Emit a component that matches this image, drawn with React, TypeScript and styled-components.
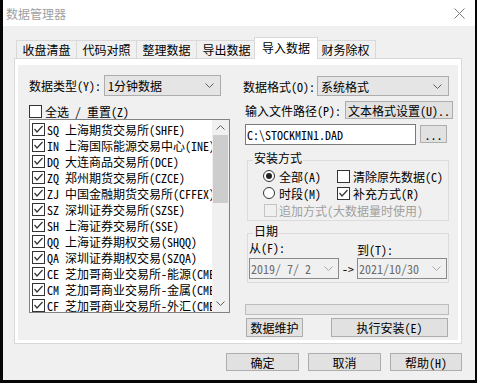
import styled, { createGlobalStyle } from "styled-components";

const SONG = `"Noto Sans Mono CJK SC", "Noto Sans CJK SC", monospace`;
const UI = `"Noto Sans CJK SC", "Noto Sans", sans-serif`;

const GlobalStyle = createGlobalStyle`
  html, body { margin: 0; padding: 0; background: #060606; }
  body { width: 477px; height: 383px; overflow: hidden; }
`;

const exchanges = [
  "SQ 上海期货交易所(SHFE)",
  "IN 上海国际能源交易中心(INE)",
  "DQ 大连商品交易所(DCE)",
  "ZQ 郑州期货交易所(CZCE)",
  "ZJ 中国金融期货交易所(CFFEX)",
  "SZ 深圳证券交易所(SZSE)",
  "SH 上海证券交易所(SSE)",
  "QQ 上海证券期权交易(SHQQ)",
  "QA 深圳证券期权交易(SZQA)",
  "CE 芝加哥商业交易所-能源(CME)",
  "CM 芝加哥商业交易所-金属(CME)",
  "CF 芝加哥商业交易所-外汇(CME)",
];

const tabs = ["收盘清盘", "代码对照", "整理数据", "导出数据", "导入数据", "财务除权"];

const Chevron = ({ up = false, color = "#606060" }: { up?: boolean; color?: string }) => (
  <svg width="9" height="5" viewBox="0 0 9 5">
    <polyline
      points={up ? "0.5,4.5 4.5,0.5 8.5,4.5" : "0.5,0.5 4.5,4.5 8.5,0.5"}
      fill="none"
      stroke={color}
      strokeWidth="1"
    />
  </svg>
);

const CheckBox = ({ checked = false, disabled = false }: { checked?: boolean; disabled?: boolean }) => (
  <Box $disabled={disabled}>
    {checked && (
      <svg width="11" height="11" viewBox="0 0 11 11">
        <polyline points="1.5,5 4,8 9.5,2" fill="none" stroke="#333" strokeWidth="1.2" />
      </svg>
    )}
  </Box>
);

const App = () => {
  return (
    <>
      <GlobalStyle />
      <Window>
        <TitleBar>
          <span>数据管理器</span>
          <svg width="11" height="11" viewBox="0 0 11 11">
            <path d="M0.5 0.5 L10.5 10.5 M10.5 0.5 L0.5 10.5" stroke="#7a7a7a" strokeWidth="1" />
          </svg>
        </TitleBar>
        <Body>
          <TabStrip>
            {tabs.map((t) => (
              <Tab key={t} $active={t === "导入数据"}>
                {t}
              </Tab>
            ))}
          </TabStrip>
          <Panel>
            <Page>
              <LeftCol>
                <FieldRow>
                  <Label $w={75}>数据类型(Y):</Label>
                  <Select $w={117}>
                    <span>1分钟数据</span>
                    <Chevron />
                  </Select>
                </FieldRow>
                <CheckAll>
                  <CheckBox />
                  <span>全选 / 重置(Z)</span>
                </CheckAll>
                <List>
                  <ListBody>
                    {exchanges.map((e) => (
                      <ListItem key={e}>
                        <CheckBox checked />
                        <ItemText>{e}</ItemText>
                      </ListItem>
                    ))}
                  </ListBody>
                  <ScrollBar>
                    <ScrollArrow>
                      <Chevron up color="#606060" />
                    </ScrollArrow>
                    <Thumb />
                    <ScrollArrow $bottom>
                      <Chevron color="#606060" />
                    </ScrollArrow>
                  </ScrollBar>
                </List>
              </LeftCol>

              <RightCol>
                <FieldRow>
                  <Label $w={74}>数据格式(O):</Label>
                  <Select $w={132} $h={20}>
                    <span>系统格式</span>
                    <Chevron />
                  </Select>
                </FieldRow>
                <PathRow>
                  <Label>输入文件路径(P):</Label>
                  <Button $w={108} $h={18} $push>
                    文本格式设置(U)..
                  </Button>
                </PathRow>
                <FileRow>
                  <TextInput>C:\STOCKMIN1.DAD</TextInput>
                  <Button $w={27} $h={18}>...</Button>
                </FileRow>

                <Group $top={15}>
                  <GroupLabel>安装方式</GroupLabel>
                  <OptionGrid>
                    <Option>
                      <Radio $checked />
                      <span>全部(A)</span>
                    </Option>
                    <Option $gap={3}>
                      <CheckBox />
                      <span>清除原先数据(C)</span>
                    </Option>
                    <Option>
                      <Radio />
                      <span>时段(M)</span>
                    </Option>
                    <Option $gap={3}>
                      <CheckBox checked />
                      <span>补充方式(R)</span>
                    </Option>
                    <Option $wide $disabled $gap={2}>
                      <CheckBox disabled />
                      <span>追加方式(大数据量时使用)</span>
                    </Option>
                  </OptionGrid>
                </Group>

                <Group $top={12}>
                  <GroupLabel>日期</GroupLabel>
                  <DateGrid>
                    <DateLabel>从(F):</DateLabel>
                    <span />
                    <DateLabel $drop={2}>到(T):</DateLabel>
                    <DateBox>
                      <span>2019/ 7/ 2</span>
                      <Chevron color="#a8a8a8" />
                    </DateBox>
                    <Arrow>-&gt;</Arrow>
                    <DateBox>
                      <span>2021/10/30</span>
                      <Chevron color="#a8a8a8" />
                    </DateBox>
                  </DateGrid>
                </Group>

                <Progress />
                <ActionRow>
                  <Button $w={57} $h={19}>数据维护</Button>
                  <Button $w={117} $h={19}>执行安装(E)</Button>
                </ActionRow>
              </RightCol>
            </Page>
          </Panel>
          <Footer>
            <Button $w={73} $h={18}>确定</Button>
            <Button $w={73} $h={18}>取消</Button>
            <Button $w={72} $h={18}>帮助(H)</Button>
          </Footer>
        </Body>
      </Window>
    </>
  );
};

const Window = styled.div`
  margin-left: 3px;
  width: 472px;
  height: 380px;
  background: #f0f0f0;
  display: flex;
  flex-direction: column;
  font-family: ${SONG};
  font-size: 12px;
  color: #000;
`;

const TitleBar = styled.div`
  height: 26px;
  flex-shrink: 0;
  background: #fff;
  display: flex;
  align-items: center;
  justify-content: space-between;
  padding: 0 10px 0 3px;
  font-family: ${UI};
  font-size: 12px;
  color: #a0a0a0;
`;

const Body = styled.div`
  padding: 11px 13px 0 11px;
  display: flex;
  flex-direction: column;
`;

const TabStrip = styled.div`
  display: flex;
  align-items: flex-end;
  height: 21px;
  padding-left: 2px;
  position: relative;
  z-index: 1;
`;

const Tab = styled.div<{ $active?: boolean }>`
  box-sizing: border-box;
  width: ${(p) => (p.$active ? 64 : 61)}px;
  height: ${(p) => (p.$active ? 22 : 18)}px;
  margin: ${(p) => (p.$active ? "0 -2px -1px -3px" : "0 0 0 -1px")};
  border: 1px solid #d9d9d9;
  border-bottom: none;
  background: ${(p) => (p.$active ? "#fff" : "#f0f0f0")};
  display: flex;
  align-items: center;
  justify-content: center;
  padding-bottom: ${(p) => (p.$active ? 2 : 0)}px;
  font-family: ${UI};
  font-size: 12px;
  position: relative;
  z-index: ${(p) => (p.$active ? 2 : 1)};
  &:first-child {
    margin-left: 0;
  }
`;

const Panel = styled.div`
  box-sizing: border-box;
  height: 286px;
  border: 1px solid #d9d9d9;
  background: #fff;
  padding: 6px 3px 3px 3px;
`;

const Page = styled.div`
  height: 100%;
  background: #f0f0f0;
  display: flex;
  gap: 13px;
  padding: 10px 0 0 11px;
  box-sizing: border-box;
`;

const LeftCol = styled.div`
  width: 201px;
  display: flex;
  flex-direction: column;
`;

const RightCol = styled.div`
  width: 210px;
  display: flex;
  flex-direction: column;
  padding-top: 1px;
`;

const FieldRow = styled.div`
  display: flex;
  align-items: center;
`;

const Label = styled.span<{ $w?: number }>`
  white-space: nowrap;
  ${(p) => (p.$w ? `width: ${p.$w}px; flex-shrink: 0;` : "")}
`;

const Select = styled.div<{ $w: number; $h?: number }>`
  box-sizing: border-box;
  width: ${(p) => p.$w}px;
  height: ${(p) => p.$h ?? 21}px;
  background: #e5e5e5;
  border: 1px solid #adadad;
  display: flex;
  align-items: center;
  justify-content: space-between;
  padding: 0 6px 0 3px;
  white-space: nowrap;
`;

const Box = styled.span<{ $disabled?: boolean }>`
  box-sizing: border-box;
  width: 13px;
  height: 13px;
  flex-shrink: 0;
  border: 1px solid ${(p) => (p.$disabled ? "#c4c4c4" : "#333")};
  background: ${(p) => (p.$disabled ? "#f0f0f0" : "#fff")};
  display: flex;
  align-items: center;
  justify-content: center;
`;

const Radio = styled.span<{ $checked?: boolean }>`
  box-sizing: border-box;
  width: 12px;
  height: 12px;
  flex-shrink: 0;
  border-radius: 50%;
  border: 1px solid #333;
  background: #fff;
  display: flex;
  align-items: center;
  justify-content: center;
  &::after {
    content: "";
    width: 6px;
    height: 6px;
    border-radius: 50%;
    background: ${(p) => (p.$checked ? "#222" : "transparent")};
  }
`;

const CheckAll = styled.div`
  margin-top: 9px;
  height: 13px;
  display: flex;
  align-items: center;
  gap: 3px;
  white-space: nowrap;
`;

const List = styled.div`
  margin-top: 1px;
  box-sizing: border-box;
  height: 194px;
  border: 1px solid #828282;
  background: #fff;
  display: flex;
`;

const ListBody = styled.div`
  flex: 1;
  min-width: 0;
  overflow: hidden;
  padding: 1px 0 0 2px;
`;

const ListItem = styled.div`
  height: 16px;
  display: flex;
  align-items: center;
  gap: 2px;
`;

const ItemText = styled.span`
  white-space: nowrap;
`;

const ScrollBar = styled.div`
  width: 17px;
  flex-shrink: 0;
  background: #f0f0f0;
  display: flex;
  flex-direction: column;
`;

const ScrollArrow = styled.div<{ $bottom?: boolean }>`
  height: 15px;
  display: flex;
  align-items: center;
  justify-content: center;
  ${(p) => (p.$bottom ? "margin-top: auto; height: 17px;" : "")}
`;

const Thumb = styled.div`
  height: 68px;
  margin: 0 1px;
  background: #cdcdcd;
`;

const PathRow = styled.div`
  margin-top: 5px;
  height: 18px;
  display: flex;
  align-items: center;
  padding-left: 2px;
`;

const FileRow = styled.div`
  margin-top: 5px;
  display: flex;
  align-items: flex-start;
  gap: 4px;
  padding-left: 2px;
  & > :last-child {
    margin-top: 1px;
  }
`;

const TextInput = styled.div`
  box-sizing: border-box;
  width: 171px;
  height: 21px;
  border: 1px solid #7a7a7a;
  background: #fff;
  display: flex;
  align-items: center;
  padding-left: 1px;
  white-space: nowrap;
`;

const Button = styled.div<{ $w: number; $h: number; $push?: boolean }>`
  box-sizing: border-box;
  width: ${(p) => p.$w}px;
  height: ${(p) => p.$h}px;
  flex-shrink: 0;
  background: #e1e1e1;
  border: 1px solid #adadad;
  display: flex;
  align-items: center;
  justify-content: center;
  white-space: nowrap;
  ${(p) => (p.$push ? "margin-left: auto;" : "")}
`;

const Group = styled.div<{ $top: number }>`
  margin: ${(p) => p.$top}px 0 0 4px;
  width: 202px;
  box-sizing: border-box;
  border: 1px solid #dcdcdc;
  display: flex;
  flex-direction: column;
`;

const GroupLabel = styled.span`
  align-self: flex-start;
  margin: -10px 0 0 5px;
  padding: 0 1px;
  line-height: 14px;
  background: #f0f0f0;
`;

const OptionGrid = styled.div`
  margin-top: 3px;
  padding: 0 0 2px 15px;
  display: grid;
  grid-template-columns: 74px 1fr;
  grid-auto-rows: 16px;
  row-gap: 1px;
  & > :last-child {
    margin-top: 1px;
  }
`;

const Option = styled.div<{ $gap?: number; $wide?: boolean; $disabled?: boolean }>`
  display: flex;
  align-items: center;
  gap: ${(p) => p.$gap ?? 4}px;
  white-space: nowrap;
  ${(p) => (p.$wide ? "grid-column: 1 / -1; padding-left: 1px;" : "")}
  color: ${(p) => (p.$disabled ? "#a0a0a0" : "#000")};
`;

const DateGrid = styled.div`
  margin-top: 3px;
  padding: 0 0 3px 1px;
  display: grid;
  grid-template-columns: 90px 18px 90px;
  grid-template-rows: 14px 21px;
  row-gap: 3px;
`;

const DateLabel = styled.span<{ $drop?: number }>`
  line-height: 14px;
  margin-top: ${(p) => p.$drop ?? 0}px;
  white-space: nowrap;
`;

const DateBox = styled.div`
  box-sizing: border-box;
  border: 1px solid #8a8a8a;
  background: #f0f0f0;
  color: #6d6d6d;
  display: flex;
  align-items: center;
  justify-content: space-between;
  padding: 0 5px 0 1px;
  white-space: nowrap;
`;

const Arrow = styled.span`
  display: flex;
  align-items: center;
  justify-content: center;
`;

const Progress = styled.div`
  margin: 21px 0 0 2px;
  width: 204px;
  height: 11px;
  box-sizing: border-box;
  background: #e6e6e6;
  border: 1px solid #bcbcbc;
`;

const ActionRow = styled.div`
  margin-top: 3px;
  display: flex;
  justify-content: space-between;
  padding: 0 5px 0 3px;
`;

const Footer = styled.div`
  margin-top: 9px;
  display: flex;
  justify-content: flex-end;
  gap: 9px;
`;

export default App;
